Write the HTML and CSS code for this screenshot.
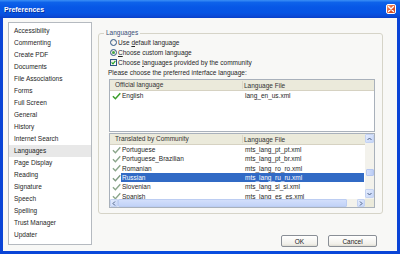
FILE: index.html
```html
<!DOCTYPE html>
<html>
<head>
<meta charset="utf-8">
<link rel="stylesheet" href="styles.css">
</head>
<body>
<div class="window">
  <div class="titlebar">
    <span class="title">Preferences</span>
    <span class="close"><svg width="8" height="8" viewBox="0 0 8 8"><path d="M1.5 1.5 L6.5 6.5 M6.5 1.5 L1.5 6.5" stroke="#fff" stroke-width="1.4" stroke-linecap="round"/></svg></span>
  </div>
  <div class="client">
    <ul class="nav">
      <li>Accessibility</li>
      <li>Commenting</li>
      <li>Create PDF</li>
      <li>Documents</li>
      <li>File Associations</li>
      <li>Forms</li>
      <li>Full Screen</li>
      <li>General</li>
      <li>History</li>
      <li>Internet Search</li>
      <li class="sel">Languages</li>
      <li>Page Display</li>
      <li>Reading</li>
      <li>Signature</li>
      <li>Speech</li>
      <li>Spelling</li>
      <li>Trust Manager</li>
      <li>Updater</li>
    </ul>
    <div class="right">
      <fieldset class="group">
        <legend>Languages</legend>
        <div class="opt"><span class="radio"></span><span>Use <u>d</u>efault language</span></div>
        <div class="opt"><span class="radio on"></span><span><u>C</u>hoose custom language</span></div>
        <div class="opt"><span class="checkbox"><svg width="5" height="5" viewBox="0 0 5 5"><path d="M0.6 2.4 L2 3.9 L4.4 0.9" fill="none" stroke="#21a121" stroke-width="1.1"/></svg></span><span>Choose <u>l</u>anguages provided by the community</span></div>
        <div class="prompt">Please choose the preferred interface language:</div>
        <div class="list list1">
          <div class="hdr"><span class="h1">Official language</span><span class="h2">Language File</span></div>
          <div class="row"><span class="ico"><svg width="10" height="8" viewBox="0 0 10 8"><path d="M1 4.2 L3.8 7 L9.2 1" fill="none" stroke="#3c9e2c" stroke-width="1.7"/></svg></span><span class="cells"><span class="t1">English</span><span class="t2">lang_en_us.xml</span></span></div>
        </div>
        <div class="list list2">
          <div class="body">
            <div class="hdr"><span class="h1">Translated by Community</span><span class="h2">Language File</span></div>
            <div class="row"><span class="ico"><svg width="10" height="8" viewBox="0 0 10 8"><path d="M1 4.2 L3.8 7 L9.2 1" fill="none" stroke="#8aa58a" stroke-width="1.5"/></svg></span><span class="cells"><span class="t1">Portuguese</span><span class="t2">mts_lang_pt_pt.xml</span></span></div>
            <div class="row"><span class="ico"><svg width="10" height="8" viewBox="0 0 10 8"><path d="M1 4.2 L3.8 7 L9.2 1" fill="none" stroke="#8aa58a" stroke-width="1.5"/></svg></span><span class="cells"><span class="t1">Portuguese_Brazilian</span><span class="t2">mts_lang_pt_br.xml</span></span></div>
            <div class="row"><span class="ico"><svg width="10" height="8" viewBox="0 0 10 8"><path d="M1 4.2 L3.8 7 L9.2 1" fill="none" stroke="#8aa58a" stroke-width="1.5"/></svg></span><span class="cells"><span class="t1">Romanian</span><span class="t2">mts_lang_ro_ro.xml</span></span></div>
            <div class="row sel"><span class="ico"><svg width="10" height="8" viewBox="0 0 10 8"><path d="M1 4.2 L3.8 7 L9.2 1" fill="none" stroke="#7f9a80" stroke-width="1.5"/></svg></span><span class="cells"><span class="t1">Russian</span><span class="t2">mts_lang_ru_ru.xml</span></span></div>
            <div class="row"><span class="ico"><svg width="10" height="8" viewBox="0 0 10 8"><path d="M1 4.2 L3.8 7 L9.2 1" fill="none" stroke="#8aa58a" stroke-width="1.5"/></svg></span><span class="cells"><span class="t1">Slovenian</span><span class="t2">mts_lang_sl_si.xml</span></span></div>
            <div class="row"><span class="ico"><svg width="10" height="8" viewBox="0 0 10 8"><path d="M1 4.2 L3.8 7 L9.2 1" fill="none" stroke="#8aa58a" stroke-width="1.5"/></svg></span><span class="cells"><span class="t1">Spanish</span><span class="t2">mts_lang_es_es.xml</span></span></div>
          </div>
          <div class="vscroll">
            <span class="sbtn"><svg width="5" height="4" viewBox="0 0 5 4"><path d="M0.5 3 L2.5 1 L4.5 3" fill="none" stroke="#4d6185" stroke-width="1"/></svg></span>
            <span class="vthumb"></span>
            <span class="sbtn down"><svg width="5" height="4" viewBox="0 0 5 4"><path d="M0.5 1 L2.5 3 L4.5 1" fill="none" stroke="#4d6185" stroke-width="1"/></svg></span>
          </div>
          <div class="hscroll">
            <span class="sbtn h"><svg width="4" height="5" viewBox="0 0 4 5"><path d="M3 0.5 L1 2.5 L3 4.5" fill="none" stroke="#4d6185" stroke-width="1"/></svg></span>
            <span class="hthumb"></span>
            <span class="sbtn h right"><svg width="4" height="5" viewBox="0 0 4 5"><path d="M1 0.5 L3 2.5 L1 4.5" fill="none" stroke="#4d6185" stroke-width="1"/></svg></span>
          </div>
          <div class="corner"></div>
        </div>
      </fieldset>
      <div class="buttons">
        <button class="btn ok">OK</button>
        <button class="btn cancel">Cancel</button>
      </div>
    </div>
  </div>
</div>
</body>
</html>
```
FILE: styles.css
```css
html, body {
  margin: 0;
  padding: 0;
}
body {
  width: 400px;
  height: 254px;
  overflow: hidden;
  font-family: "Liberation Sans", Arial, sans-serif;
  font-size: 6.5px;
  color: #262626;
}
.window {
  width: 400px;
  height: 254px;
  display: flex;
  flex-direction: column;
  background: linear-gradient(90deg, #0a44d6, #0a4ee0 50%, #0a44d6);
}
.titlebar {
  height: 18px;
  flex: none;
  display: flex;
  align-items: center;
  justify-content: space-between;
  padding: 0 4px 0 4px;
  background: linear-gradient(#3a8ff6 0%, #0d62ea 14%, #0757e6 40%, #0655e4 70%, #0a4bd8 88%, #0840c8 100%);
}
.title {
  color: #fff;
  font-weight: bold;
  font-size: 7px;
  text-shadow: 1px 1px 0 #0b2f9a;
}
.close {
  width: 10px;
  height: 10px;
  box-sizing: border-box;
  border: 1px solid #fff;
  border-radius: 2px;
  background: linear-gradient(135deg, #f4a07a, #e2582a 50%, #c8401a);
  display: flex;
  align-items: center;
  justify-content: center;
}
.close svg { display: block; }
.client {
  flex: 1;
  margin: 0 3px 3px;
  background: #f8f8f6;
  display: grid;
  grid-template-columns: 84px 285px;
  column-gap: 6px;
  align-items: start;
  padding: 4px 0 0 5px;
}
.nav {
  list-style: none;
  margin: 0;
  padding: 2px 0 0;
  height: 223px;
  box-sizing: border-box;
  border: 1px solid #b5bac0;
  background: #fff;
}
.nav li {
  height: 12px;
  line-height: 12px;
  padding-left: 5px;
  white-space: nowrap;
}
.nav li.sel { background: #e8e8e8; }
.right {
  display: flex;
  flex-direction: column;
}
.group {
  margin: 7px 0 0;
  padding: 0 7px 5px 10px;
  border: 1px solid #d6d4c8;
  border-radius: 3px;
  min-width: 0;
}
.group legend {
  padding: 0 2px;
  margin-left: -5px;
  line-height: 8px;
  color: #3b4f78;
}
.opt {
  height: 10px;
  display: flex;
  align-items: center;
  gap: 1px;
  white-space: nowrap;
}
.opt u { text-decoration-thickness: 0.5px; text-underline-offset: 1px; }
.radio {
  width: 7px;
  height: 7px;
  margin-left: 1px;
  box-sizing: border-box;
  border: 1px solid #2f5585;
  border-radius: 50%;
  background: radial-gradient(circle at 60% 60%, #ffffff, #dedcd3);
  display: flex;
  align-items: center;
  justify-content: center;
}
.radio.on::after {
  content: "";
  width: 3px;
  height: 3px;
  border-radius: 50%;
  background: #43a343;
}
.checkbox {
  width: 7px;
  height: 7px;
  margin-left: 1px;
  box-sizing: border-box;
  border: 1px solid #2f5585;
  background: linear-gradient(135deg, #e8e6de, #ffffff);
  display: flex;
  align-items: center;
  justify-content: center;
}
.checkbox svg { display: block; }
.prompt {
  height: 10px;
  line-height: 10px;
  margin: 1px 0 1px -1px;
  white-space: nowrap;
}
.list {
  border: 1px solid #a9b1bb;
  background: #fff;
  box-sizing: border-box;
  overflow: hidden;
}
.list1 { height: 53px; }
.list2 {
  height: 75px;
  margin-top: 1px;
  display: grid;
  grid-template-columns: 255px 9px;
  grid-template-rows: 65px 8px;
}
.hdr {
  height: 11px;
  box-sizing: border-box;
  display: flex;
  align-items: center;
  background: #ebeadb;
  border-bottom: 1px solid #d6d2c2;
  white-space: nowrap;
  color: #333;
}
.h1 {
  width: 133px;
  padding-left: 5px;
  box-sizing: border-box;
  border-right: 1px solid #dcd9c9;
  height: 8px;
  line-height: 8px;
}
.h2 { padding-left: 1px; }
.row {
  height: 9.33px;
  line-height: 9.33px;
  display: flex;
  white-space: nowrap;
}
.ico {
  width: 11px;
  flex: none;
  display: flex;
  align-items: center;
  padding-left: 2px;
  box-sizing: border-box;
}
.ico svg { display: block; }
.cells {
  flex: 1;
  display: flex;
}
.t1 {
  width: 124px;
  padding-left: 1px;
  box-sizing: border-box;
}
.row.sel .cells {
  background: #316ac5;
  color: #fff;
  margin-right: 1px;
}
.body {
  overflow: hidden;
}
.vscroll {
  display: flex;
  flex-direction: column;
  align-items: center;
  background: #f3f2ec;
}
.sbtn {
  width: 9px;
  height: 9px;
  box-sizing: border-box;
  border: 1px solid #c4d3f2;
  border-radius: 1px;
  background: linear-gradient(135deg, #e4ecfd, #c5d5f8);
  display: flex;
  align-items: center;
  justify-content: center;
  flex: none;
}
.sbtn svg { display: block; }
.sbtn.down { margin-top: auto; margin-bottom: 1px; }
.vthumb {
  width: 8px;
  height: 7px;
  margin-top: 26px;
  border-radius: 1px;
  background: linear-gradient(90deg, #d2defa, #bccdf5);
  border: 1px solid #b4c6f0;
  box-sizing: border-box;
}
.hscroll {
  display: flex;
  align-items: center;
  background: #f3f2ec;
}
.sbtn.h { width: 8px; height: 8px; }
.sbtn.right { margin-left: auto; }
.hthumb {
  width: 229px;
  height: 8px;
  box-sizing: border-box;
  border: 1px solid #bccdf2;
  border-radius: 1px;
  background: linear-gradient(#d3dffb, #c2d3f7);
}
.corner { background: #ebeadb; }
.buttons {
  display: flex;
  justify-content: flex-end;
  gap: 10px;
  margin-top: 21px;
  padding-right: 6px;
}
.btn {
  height: 12px;
  padding: 0;
  margin: 0;
  font-family: "Liberation Sans", Arial, sans-serif;
  font-size: 6.5px;
  color: #222;
  border: 1px solid #8a8f96;
  border-radius: 2px;
  background: linear-gradient(#ffffff, #f1f0ea 80%, #dedcd2);
}
.btn.ok { width: 37px; }
.btn.cancel { width: 49px; }
```
